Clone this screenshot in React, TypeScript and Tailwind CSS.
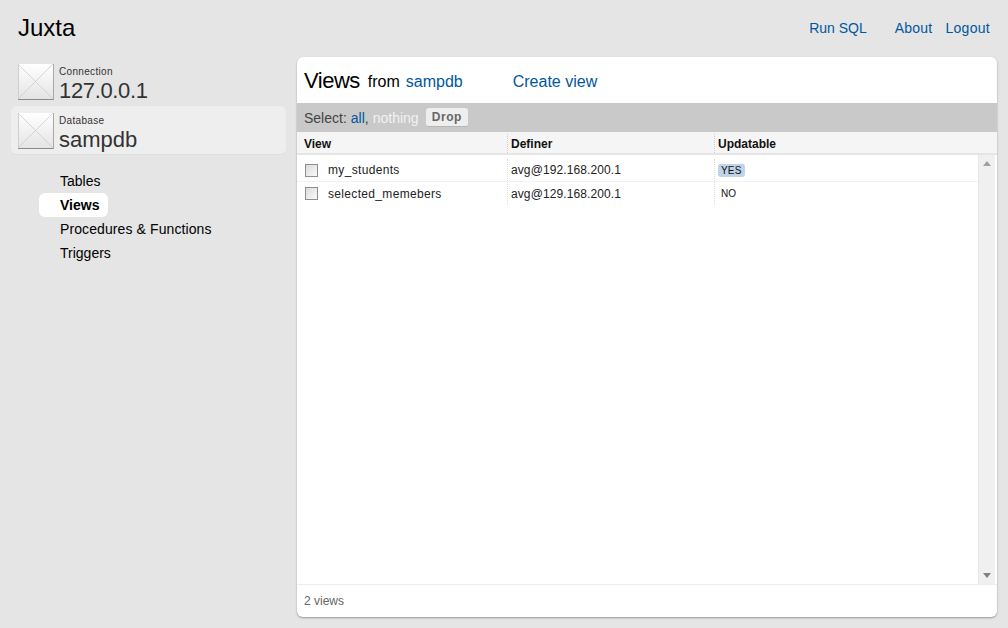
function PlaceholderIcon() {
  return (
    <svg width="36" height="36" viewBox="0 0 36 36" className="shrink-0">
      <defs>
        <linearGradient id="ph" x1="0" y1="0" x2="0" y2="1">
          <stop offset="0" stopColor="#ffffff" />
          <stop offset="1" stopColor="#e4e4e4" />
        </linearGradient>
      </defs>
      <rect x="0" y="0" width="35" height="35" fill="url(#ph)" />
      <path d="M0 0 L35 35 M35 0 L0 35" stroke="#c8c8c8" strokeWidth="0.7" fill="none" />
      <path d="M0.5 0 V35" stroke="#cfcfcf" fill="none" />
      <path d="M0 35.5 H36" stroke="#8a8a8a" fill="none" />
      <path d="M35.5 0 V36" stroke="#a8a8a8" fill="none" />
    </svg>
  )
}

function Crumb({ label, value, active, valueClass }: { label: string; value: string; active?: boolean; valueClass?: string }) {
  return (
    <div className={active ? 'flex h-[49px] items-start gap-[5px] rounded-md border-b border-[#dedede] bg-[#eeeeee] pl-[7px] pt-[7px]' : 'flex h-[49px] items-start gap-[5px] pl-[7px] pt-[7px]'}>
      <PlaceholderIcon />
      <div className="mt-[2px]">
        <div className="text-[10px] leading-[12px] tracking-[0.33px] text-[#333333]">{label}</div>
        <div className={'text-[22px] leading-[26px] text-[#333333] ' + (valueClass ?? '')}>{value}</div>
      </div>
    </div>
  )
}

function Row({ name, definer, updatable, yes, first }: { name: string; definer: string; updatable: string; yes?: boolean; first?: boolean }) {
  return (
    <div className={first ? 'flex h-[27px] border-b border-[#f2f2f2] pt-[4px] text-xs text-[#222222]' : 'flex h-[23px] text-xs text-[#222222]'}>
      <div className="flex w-[211px] items-center border-r border-dotted border-[#dddddd] pl-[8px]">
        <span className="h-[13px] w-[13px] border border-[#8e8e8e] bg-gradient-to-br from-[#dcdcdc] to-[#f8f8f8]" />
        <span className="ml-[10px] tracking-[0.33px]">{name}</span>
      </div>
      <div className="flex w-[207px] items-center border-r border-dotted border-[#dddddd] pl-[3px] tracking-[0.1px]">{definer}</div>
      <div className="flex items-center pl-[3px]">
        <span className={yes ? 'rounded-[3px] bg-[#bfd4e8] px-[3px] text-[10px] leading-[13px] tracking-[0.2px] text-[#111111]' : 'px-[3px] text-[10px] leading-[13px] text-[#111111]'}>{updatable}</span>
      </div>
    </div>
  )
}

export default function App() {
  return (
    <div className="h-[628px] w-[1008px] overflow-hidden bg-[#e5e5e5] font-['Liberation_Sans',Arial,sans-serif]">
      <header className="flex h-[57px] items-start justify-between px-[18px]">
        <h1 className="mt-[14px] text-[24px] leading-[28px] text-black">Juxta</h1>
        <nav className="mt-[20px] flex text-sm leading-4 text-[#00579e]">
          <a className="mr-[28px]">Run SQL</a>
          <a className="mr-[13px] tracking-[0.2px]">About</a>
          <a className="tracking-[0.3px]">Logout</a>
        </nav>
      </header>

      <div className="flex">
        <aside className="w-[297px] shrink-0 pl-[11px] pr-[11px]">
          <Crumb label="Connection" value="127.0.0.1" valueClass="tracking-[-0.35px]" />
          <Crumb label="Database" value="sampdb" active />
          <ul className="mt-[14px] text-sm leading-6 text-black">
            <li className="pl-[49px]">Tables</li>
            <li className="ml-[28px] w-[69px] rounded-md bg-white pl-[21px] font-bold">Views</li>
            <li className="pl-[49px] tracking-[0.1px]">Procedures &amp; Functions</li>
            <li className="pl-[49px]">Triggers</li>
          </ul>
        </aside>

        <main className="flex h-[560px] w-[700px] flex-col overflow-hidden rounded-md bg-white shadow-[0_1px_2px_rgba(0,0,0,0.35)]">
          <div className="flex h-[46px] items-start pl-[7px] pt-[10px]">
            <h2 className="text-[22px] leading-[28px] tracking-[-0.5px] text-black">Views</h2>
            <span className="ml-[8px] mt-[6px] text-base leading-[18px] text-black">from</span>
            <a className="ml-[6px] mt-[6px] text-base leading-[18px] text-[#00579e]">sampdb</a>
            <a className="ml-[50px] mt-[6px] text-base leading-[18px] text-[#00579e]">Create view</a>
          </div>

          <div className="flex h-[29px] items-center bg-[#c9c9c9] pl-[7px] text-sm text-[#444444]">
            <span>Select:</span>
            <a className="ml-1 text-[#00579e]">all</a>
            <span>,</span>
            <a className="ml-1 text-[#f2f2f2]">nothing</a>
            <button className="ml-[7px] h-[19px] rounded-[3px] border-b border-[#b5b5b5] bg-[#eeeeee] px-[6px] text-xs font-bold leading-[18px] tracking-[0.6px] text-[#666666]">Drop</button>
          </div>

          <div className="flex h-[23px] border-b-2 border-[#e5e5e5] bg-[#f5f5f5] pt-[2px] text-xs font-bold text-[#111111]">
            <div className="flex w-[211px] items-center border-r border-dotted border-[#cccccc] pl-[7px]">View</div>
            <div className="flex w-[207px] items-center border-r border-dotted border-[#cccccc] pl-[3px]">Definer</div>
            <div className="flex items-center pl-[3px]">Updatable</div>
          </div>

          <div className="flex min-h-0 flex-1 border-b border-[#eeeeee] pr-[2px]">
            <div className="min-w-0 flex-1">
              <Row first name="my_students" definer="avg@192.168.200.1" updatable="YES" yes />
              <Row name="selected_memebers" definer="avg@129.168.200.1" updatable="NO" />
            </div>
            <div className="flex w-[17px] flex-col items-center justify-between border-l border-[#e6e6e6] bg-[#f0f0f0] py-[6px]">
              <svg width="8" height="5" viewBox="0 0 8 5"><path d="M4 0 L8 5 H0 Z" fill="#a0a0a0" /></svg>
              <svg width="8" height="5" viewBox="0 0 8 5"><path d="M0 0 H8 L4 5 Z" fill="#808080" /></svg>
            </div>
          </div>

          <div className="flex h-[32px] items-center pl-[7px] text-xs text-[#666666]">2 views</div>
        </main>
      </div>
    </div>
  )
}
